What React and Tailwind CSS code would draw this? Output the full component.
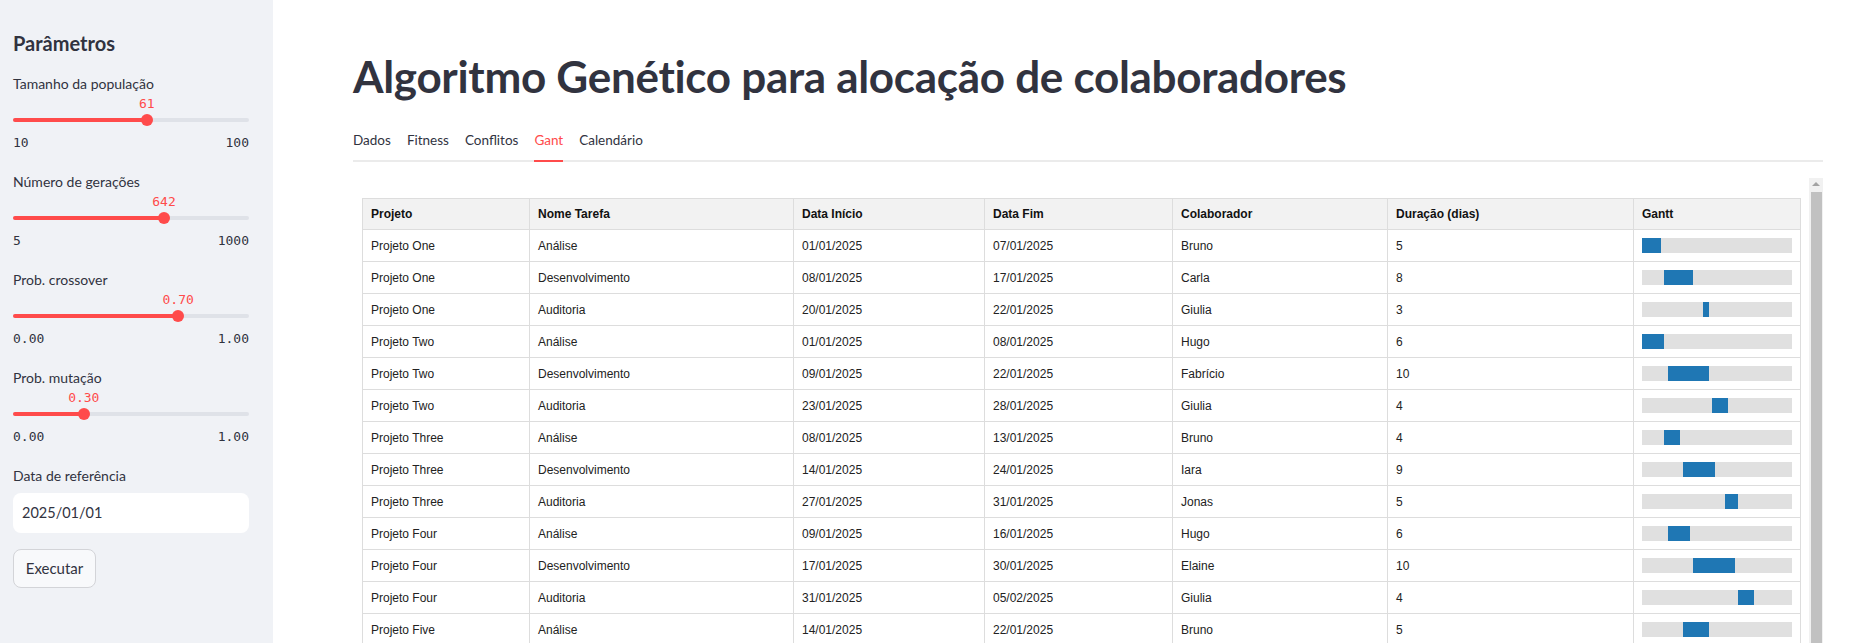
import { useState } from "react";

const sliders = [
    { label: "Tamanho da população", value: "61", min: "10", max: "100", pct: 0.567 },
    { label: "Número de gerações", value: "642", min: "5", max: "1000", pct: 0.64 },
    { label: "Prob. crossover", value: "0.70", min: "0.00", max: "1.00", pct: 0.7 },
    { label: "Prob. mutação", value: "0.30", min: "0.00", max: "1.00", pct: 0.3 },
];

const tabs = ["Dados", "Fitness", "Conflitos", "Gant", "Calendário"];

const rows = [
    ["Projeto One", "Análise", "01/01/2025", "07/01/2025", "Bruno", 5],
    ["Projeto One", "Desenvolvimento", "08/01/2025", "17/01/2025", "Carla", 8],
    ["Projeto One", "Auditoria", "20/01/2025", "22/01/2025", "Giulia", 3],
    ["Projeto Two", "Análise", "01/01/2025", "08/01/2025", "Hugo", 6],
    ["Projeto Two", "Desenvolvimento", "09/01/2025", "22/01/2025", "Fabrício", 10],
    ["Projeto Two", "Auditoria", "23/01/2025", "28/01/2025", "Giulia", 4],
    ["Projeto Three", "Análise", "08/01/2025", "13/01/2025", "Bruno", 4],
    ["Projeto Three", "Desenvolvimento", "14/01/2025", "24/01/2025", "Iara", 9],
    ["Projeto Three", "Auditoria", "27/01/2025", "31/01/2025", "Jonas", 5],
    ["Projeto Four", "Análise", "09/01/2025", "16/01/2025", "Hugo", 6],
    ["Projeto Four", "Desenvolvimento", "17/01/2025", "30/01/2025", "Elaine", 10],
    ["Projeto Four", "Auditoria", "31/01/2025", "05/02/2025", "Giulia", 4],
    ["Projeto Five", "Análise", "14/01/2025", "22/01/2025", "Bruno", 5],
];

const headers = ["Projeto", "Nome Tarefa", "Data Início", "Data Fim", "Colaborador", "Duração (dias)", "Gantt"];
const colWidths = ["w-[167px]", "w-[264px]", "w-[191px]", "w-[188px]", "w-[215px]", "w-[246px]", "w-[167px]"];

const TOTAL_DAYS = 47;

// dd/mm/yyyy -> dias desde 01/01/2025
const dayOf = (s) => {
    const [d, m, y] = s.split("/").map(Number);
    return (Date.UTC(y, m - 1, d) - Date.UTC(2025, 0, 1)) / 86400000;
};

const Slider = ({ label, value, min, max, pct }) => {
    const left = `${pct * 100}%`;
    return (
        <div className="flex flex-col">
            <label className="text-[14px] leading-[20px] text-[#31333f]">{label}</label>
            <div className="relative h-[20px]">
                <span
                    className="absolute top-0 -translate-x-1/2 font-['DejaVu_Sans_Mono',monospace] text-[13px] leading-[20px] text-[#ff4b4b]"
                    style={{ left }}
                >
                    {value}
                </span>
            </div>
            <div className="relative h-[12px] flex items-center">
                <div className="w-full h-[4px] rounded-full bg-[#dfe2e8]" />
                <div className="absolute left-0 h-[4px] rounded-full bg-[#ff4b4b]" style={{ width: left }} />
                <div
                    className="absolute w-[12px] h-[12px] -translate-x-1/2 rounded-full bg-[#ff4b4b]"
                    style={{ left }}
                />
            </div>
            <div className="flex justify-between mt-[8px] font-['DejaVu_Sans_Mono',monospace] text-[13px] leading-[18px] text-[#31333f]">
                <span>{min}</span>
                <span>{max}</span>
            </div>
        </div>
    );
};

const App = () => {
    const [active, setActive] = useState("Gant");

    return (
        <div className="flex h-screen overflow-hidden bg-white font-['Lato',sans-serif] text-[#31333f]">
            <aside className="w-[273px] flex-shrink-0 bg-[#f0f2f6] pl-[13px] pr-[24px] pt-[29px]">
                <h2 className="text-[20px] leading-[28px] font-bold">Parâmetros</h2>
                <div className="mt-[17px] flex flex-col gap-[20px]">
                    {sliders.map((s) => (
                        <Slider key={s.label} {...s} />
                    ))}
                </div>
                <label className="block mt-[20px] text-[14px] leading-[20px]">Data de referência</label>
                <div className="mt-[7px] h-[40px] w-full rounded-lg bg-white flex items-center px-[9px] text-[14.5px]">
                    2025/01/01
                </div>
                <button
                    type="button"
                    className="mt-[16px] h-[39px] w-[83px] flex items-center justify-center rounded-lg border border-[#d3d4d8] bg-[#f8f9fb] text-[15px]"
                >
                    Executar
                </button>
            </aside>

            <main className="flex-1 min-w-0 pl-[80px] pr-[49px] pt-[50px]">
                <h1 className="text-[44px] leading-[52px] font-bold tracking-[-0.3px] text-[#31333f]">
                    Algoritmo Genético para alocação de colaboradores
                </h1>

                <div className="mt-[28px] flex gap-[16px] border-b-2 border-[#ebebeb]">
                    {tabs.map((t) => (
                        <button
                            key={t}
                            type="button"
                            onClick={() => setActive(t)}
                            className={`relative pb-[10px] text-[13.5px] leading-[20px] ${
                                t === active ? "text-[#ff4b4b]" : "text-[#31333f]"
                            }`}
                        >
                            {t}
                            {t === active && (
                                <span className="absolute left-0 right-0 -bottom-[2px] h-[2px] bg-[#ff4b4b]" />
                            )}
                        </button>
                    ))}
                </div>

                <div className="mt-[16px] flex">
                    <div className="flex-1 min-w-0 pl-[9px] pt-[20px]">
                        <table className="table-fixed border-collapse font-['Liberation_Sans',Arial,sans-serif] text-[12px] text-[#222]">
                            <colgroup>
                                {colWidths.map((w, i) => (
                                    <col key={i} className={w} />
                                ))}
                            </colgroup>
                            <thead>
                                <tr className="h-[31px] bg-[#f2f2f2]">
                                    {headers.map((h) => (
                                        <th
                                            key={h}
                                            className="border border-[#dddddd] px-[8px] text-left font-bold text-[#111]"
                                        >
                                            {h}
                                        </th>
                                    ))}
                                </tr>
                            </thead>
                            <tbody>
                                {rows.map((r, i) => {
                                    const start = dayOf(r[2]);
                                    const span = dayOf(r[3]) - start;
                                    return (
                                        <tr key={i} className="h-[32px]">
                                            {r.map((c, j) => (
                                                <td key={j} className="border border-[#dddddd] px-[8px]">
                                                    {c}
                                                </td>
                                            ))}
                                            <td className="border border-[#dddddd] px-[8px]">
                                                <div className="relative h-[15px] bg-[#e0e0e0]">
                                                    <div
                                                        className="absolute top-0 h-full bg-[#1f77b4]"
                                                        style={{
                                                            left: `${(start / TOTAL_DAYS) * 100}%`,
                                                            width: `${(span / TOTAL_DAYS) * 100}%`,
                                                        }}
                                                    />
                                                </div>
                                            </td>
                                        </tr>
                                    );
                                })}
                            </tbody>
                        </table>
                    </div>
                    <div className="ml-[8px] w-[14px] flex-shrink-0 bg-[#f1f1f1] flex flex-col items-center">
                        <span className="mt-[4px] h-0 w-0 border-x-[4px] border-b-[4px] border-x-transparent border-b-[#a3a3a3]" />
                        <div className="mt-[6px] w-[11px] h-[600px] bg-[#c1c1c1]" />
                    </div>
                </div>
            </main>
        </div>
    );
};

export default App;
